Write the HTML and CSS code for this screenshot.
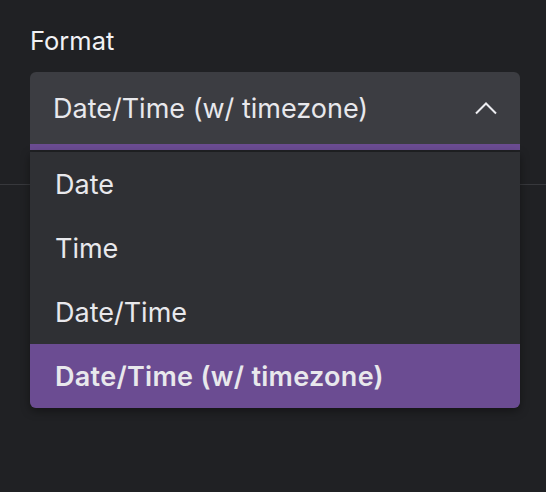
FILE: index.html
```html
<!DOCTYPE html>
<html>
<head>
<meta charset="utf-8">
<link rel="stylesheet" href="styles.css">
</head>
<body>
<div class="page">
  <div class="divider"></div>
  <div class="field">
    <div class="label">Format</div>
    <div class="select">
      <div class="control">
        <span class="value">Date/Time (w/ timezone)</span>
        <svg class="chevron" width="22" height="14" viewBox="0 0 22 14"><path d="M1 12.5 L11 2.5 L21 12.5" fill="none" stroke="#ececf0" stroke-width="2"/></svg>
      </div>
      <ul class="menu">
        <li class="option">Date</li>
        <li class="option">Time</li>
        <li class="option">Date/Time</li>
        <li class="option selected">Date/Time (w/ timezone)</li>
      </ul>
    </div>
  </div>
</div>
</body>
</html>
```
FILE: styles.css
```css
html, body {
  margin: 0;
  padding: 0;
  background: #202124;
  width: 546px;
  height: 492px;
  overflow: hidden;
  font-family: Inter, "Noto Sans", sans-serif;
  color: #e8e8ec;
}
.page {
  position: relative;
  width: 546px;
  height: 492px;
}
.divider {
  position: absolute;
  left: 0;
  right: 0;
  top: 184px;
  height: 1px;
  background: #37383c;
}
.field {
  position: relative;
  padding: 27px 26px 0 30px;
}
.label {
  font-size: 25.5px;
  line-height: 28px;
  height: 28px;
  margin-bottom: 17px;
  color: #f2f2f5;
}
.select {
  position: relative;
}
.control {
  height: 78px;
  box-sizing: border-box;
  background: #3c3d42;
  border-radius: 6px 6px 0 0;
  border-bottom: 6px solid #6b4c92;
  display: flex;
  align-items: center;
  padding: 0 23px 0 23px;
  justify-content: space-between;
}
.value {
  font-size: 27px;
}
.chevron {
  display: block;
}
.menu {
  position: absolute;
  left: 0;
  right: 0;
  top: 80px;
  margin: 0;
  padding: 0;
  list-style: none;
  background: #2f3034;
  border-radius: 0 0 6px 6px;
  overflow: hidden;
  box-shadow: 0 3px 10px rgba(0,0,0,0.4);
}
.option {
  height: 64px;
  display: flex;
  align-items: center;
  padding-left: 25px;
  font-size: 27px;
  color: #e8e8ec;
}
.option.selected {
  background: #6b4c92;
  font-weight: 600;
  letter-spacing: 0.3px;
}
```
